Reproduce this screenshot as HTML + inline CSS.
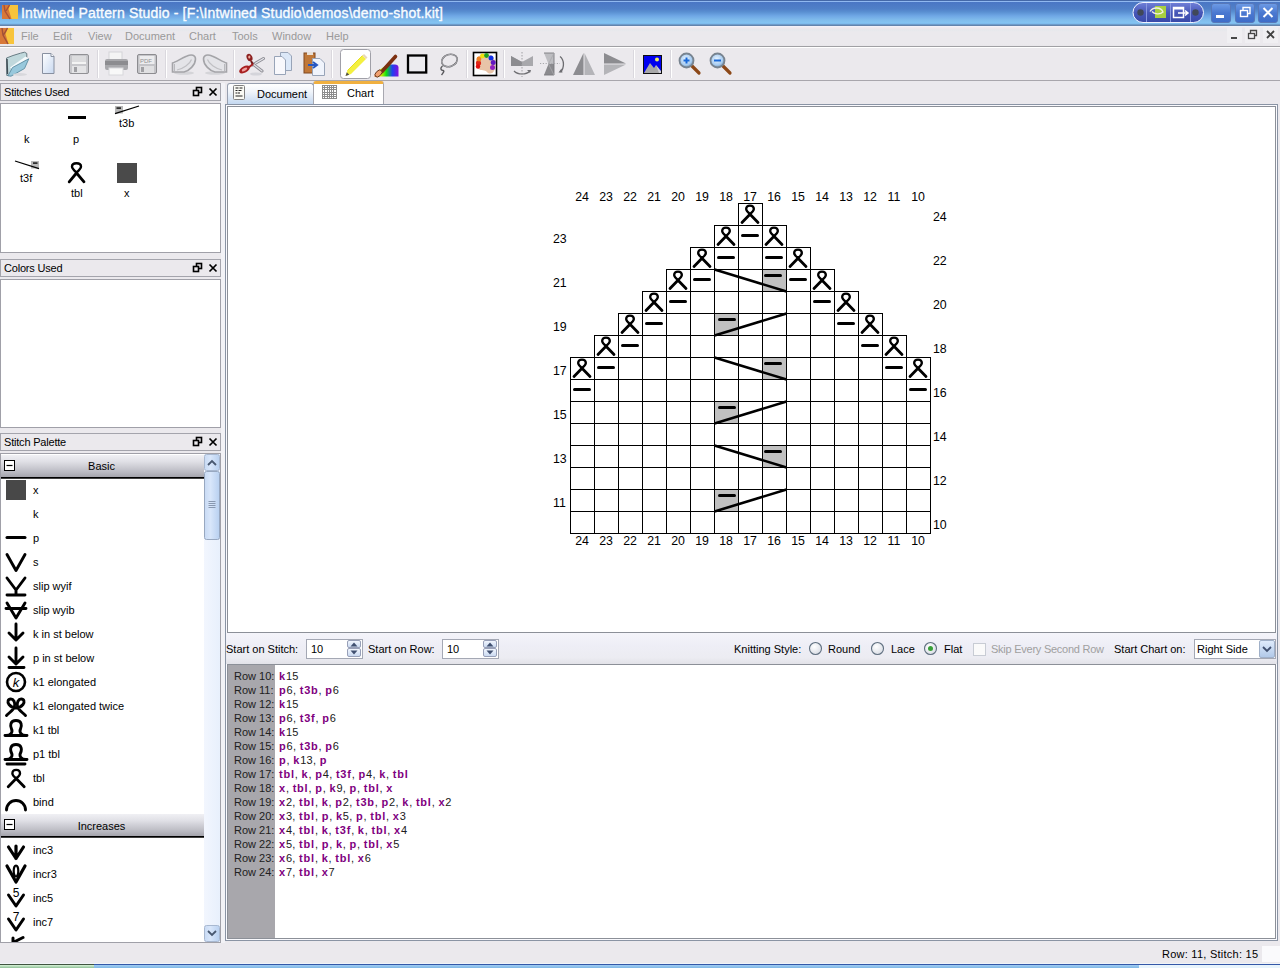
<!DOCTYPE html>
<html><head><meta charset="utf-8">
<style>
*{box-sizing:border-box;margin:0;padding:0}
html,body{width:1280px;height:968px;overflow:hidden;background:#EBE9ED;font-family:"Liberation Sans",sans-serif;font-size:11px;color:#000}
.a{position:absolute}
.t{position:absolute;white-space:pre;line-height:13px}
#title{left:0;top:0;width:1280px;height:26px;background:linear-gradient(#4468A8 0px,#4468A8 1px,#90B8F0 1px,#90B8F0 2px,#4A76C4 2px,#5080C8 9px,#5A90D2 12px,#70A8E6 16px,#80BCEC 20px,#84C4F2 23px,#78B4E8 24px,#6484AC 25px,#6484AC 26px)}
#menubar{left:0;top:26px;width:1280px;height:21px;background:linear-gradient(#F4F4FC 0px,#EFE8EC 2px,#E6E8EC 4px,#EBE9ED 6px,#EBE9ED 18px,#E8E6EA 20px)}
#toolbar{left:0;top:47px;width:1280px;height:34px;background:#EBE9ED;border-top:1px solid #FFFFFF}
.hdr{position:absolute;left:0;width:221px;height:18px;border:1px solid #A4A4AC;background:#EBE9ED}
.hdr .t{left:3px;top:2px;font-size:11px;letter-spacing:-0.2px}
.cnt{position:absolute;left:0;width:221px;background:#fff;border:1px solid #A0A0A8}
.cn{width:24px;text-align:center;font-size:13px;line-height:14px;transform:scaleX(0.95)}
.rw{color:#202020;letter-spacing:0.3px}.rw b{color:#800080;letter-spacing:0.8px}
.grp{background:linear-gradient(#F0F0F4,#E0E0E6 30%,#B8B8C0 80%,#A4A4AC);border-bottom:1px solid #000;box-shadow:0 1px 0 #404040}
.sep{position:absolute;top:51px;width:1px;height:26px;background:#D0CED4;border-right:1px solid #FFFFFF}
</style></head><body>

<svg width="0" height="0" style="position:absolute">
<defs>
<symbol id="tbl" viewBox="0 0 24 22" overflow="visible"><path d="M12 11 C14.9 8.8 15.8 7.6 15.8 6.1 C15.8 3.9 14.1 2.6 12 2.6 C9.9 2.6 8.2 3.9 8.2 6.1 C8.2 7.6 9.1 8.8 12 11" fill="none" stroke="#000" stroke-width="2.4"/><path d="M4 19.4 L12 11.2 L20 19.4" fill="none" stroke="#000" stroke-width="2.8" stroke-linecap="round" stroke-linejoin="round"/></symbol>
</defs></svg>

<div id="title" class="a"></div>
<div class="t" style="left:21px;top:7px;font-size:14px;color:#F8FCFF;letter-spacing:0.17px;-webkit-text-stroke:0.35px #F8FCFF">Intwined Pattern Studio - [F:\Intwined Studio\demos\demo-shot.kit]</div>
<div id="menubar" class="a"></div>
<div class="a" style="left:0;top:46px;width:1280px;height:1px;background:#A0A0A4"></div>
<div class="t" style="left:21px;top:30px;color:#999999">File</div>
<div class="t" style="left:53px;top:30px;color:#999999">Edit</div>
<div class="t" style="left:88px;top:30px;color:#999999">View</div>
<div class="t" style="left:125px;top:30px;color:#999999">Document</div>
<div class="t" style="left:189px;top:30px;color:#999999">Chart</div>
<div class="t" style="left:232px;top:30px;color:#999999">Tools</div>
<div class="t" style="left:272px;top:30px;color:#999999">Window</div>
<div class="t" style="left:326px;top:30px;color:#999999">Help</div>
<div id="toolbar" class="a"></div>
<div class="a" style="left:0;top:80px;width:1280px;height:1px;background:#A8A6AC"></div>


<svg class="a" style="left:0;top:0" width="1280" height="82" viewBox="0 0 1280 82">
<defs>
<linearGradient id="gBtn" x1="0" y1="0" x2="0" y2="1"><stop offset="0" stop-color="#6E9CE6"/><stop offset="0.5" stop-color="#4A78D0"/><stop offset="1" stop-color="#3E6CC8"/></linearGradient>
<linearGradient id="gPill" x1="0" y1="0" x2="0" y2="1"><stop offset="0" stop-color="#7080D8"/><stop offset="0.5" stop-color="#4858B8"/><stop offset="1" stop-color="#3848A8"/></linearGradient>
<linearGradient id="gRain" x1="0" y1="0" x2="1" y2="0"><stop offset="0" stop-color="#F07020"/><stop offset="0.25" stop-color="#F8F000"/><stop offset="0.5" stop-color="#10E010"/><stop offset="0.75" stop-color="#2040F0"/><stop offset="1" stop-color="#8010E0"/></linearGradient>
<linearGradient id="gDoc" x1="0" y1="0" x2="1" y2="1"><stop offset="0" stop-color="#FFFFFF"/><stop offset="1" stop-color="#C8D8F0"/></linearGradient>
<radialGradient id="gLens" cx="0.45" cy="0.4" r="0.6"><stop offset="0" stop-color="#E8F4FF"/><stop offset="0.7" stop-color="#A8CCF0"/><stop offset="1" stop-color="#7090B0"/></radialGradient>
</defs>
<!-- app icon title -->
<rect x="2" y="5" width="16" height="14" fill="#F8C43C"/>
<path d="M2 5 L10 5 L8.5 9 L11.5 19 L2 19 Z" fill="#D87838"/>
<path d="M4 5 L5 11 L10 19 M9.5 5 L6 11" stroke="#A85038" stroke-width="1.4" fill="none"/>
<!-- app icon menubar -->
<rect x="0" y="28" width="14" height="16" fill="#F8C43C"/>
<path d="M0 28 L8 28 L5.5 34 L8.5 44 L0 44 Z" fill="#D87838"/>
<path d="M2 28 L3 35 L8 44 M7.5 28 L3.5 35" stroke="#A05038" stroke-width="1.4" fill="none"/>
<!-- nvidia pill -->
<rect x="1133" y="2.5" width="70.5" height="20" rx="10" fill="url(#gPill)" stroke="#F0F4FF" stroke-width="1"/>
<circle cx="1140.5" cy="12.5" r="3.2" fill="#404858"/>
<circle cx="1195.5" cy="12.5" r="3.2" fill="#404858"/>
<line x1="1146.5" y1="3" x2="1146.5" y2="22" stroke="#8898E0"/>
<line x1="1170.5" y1="3" x2="1170.5" y2="22" stroke="#8898E0"/>
<line x1="1190.5" y1="3" x2="1190.5" y2="22" stroke="#8898E0"/>
<rect x="1155" y="6" width="11" height="12" fill="#A8D040"/>
<path d="M1150 11.5 C1153 6.5 1161 7 1163 12 C1160 15 1154 14 1152 11.5" stroke="#F0F0E0" stroke-width="1.3" fill="none"/>
<rect x="1173.5" y="7.5" width="10" height="10" fill="none" stroke="#fff" stroke-width="1.5"/>
<rect x="1173.5" y="7.5" width="10" height="2" fill="#fff"/>
<path d="M1178 13 L1188 13 M1185 10.5 L1188 13 L1185 15.5" stroke="#fff" stroke-width="1.5" fill="none"/>
<!-- title buttons -->
<rect x="1211.5" y="3.5" width="19" height="19" rx="2.5" fill="url(#gBtn)" stroke="#5878B8"/>
<rect x="1216" y="15" width="8" height="3" fill="#fff"/>
<rect x="1235.5" y="3.5" width="19" height="19" rx="2.5" fill="url(#gBtn)" stroke="#5878B8"/>
<rect x="1240.5" y="10.5" width="7" height="6" fill="none" stroke="#fff" stroke-width="1.4"/>
<path d="M1243 10 L1243 7.5 L1250 7.5 L1250 13.5 L1248 13.5" fill="none" stroke="#fff" stroke-width="1.4"/>
<rect x="1258.5" y="3.5" width="19" height="19" rx="2.5" fill="url(#gBtn)" stroke="#5878B8"/>
<path d="M1263.5 8 L1272.5 17 M1272.5 8 L1263.5 17" stroke="#fff" stroke-width="2"/>
<!-- mdi buttons -->
<rect x="1227" y="27" width="15" height="16" fill="#F0EFF2"/>
<rect x="1231" y="37" width="6" height="2" fill="#484848"/>
<rect x="1245" y="27" width="15" height="16" fill="#F0EFF2"/>
<rect x="1248.5" y="33.5" width="6" height="5" fill="none" stroke="#484848" stroke-width="1.3"/>
<path d="M1250.5 33 L1250.5 30.5 L1256.5 30.5 L1256.5 35.5 L1255 35.5" fill="none" stroke="#484848" stroke-width="1.3"/>
<rect x="1263" y="27" width="15" height="16" fill="#F0EFF2"/>
<path d="M1267 31 L1274 38 M1274 31 L1267 38" stroke="#404040" stroke-width="1.8"/>

<!-- toolbar: open folder -->
<path d="M6.5 58 L13 55.5 L20.5 53.2 L24.5 52.2 L26.8 53.5 L26.8 57.5 L10 75.5 L6.8 75.5 Z" fill="#C0D8DC" stroke="#687C84" stroke-width="1"/>
<path d="M7 59 L7.5 74" stroke="#404C54" stroke-width="1.4"/>
<path d="M10 67.5 L25.5 56.5 L28 58 L13 70 Z" fill="#F4FAFC"/>
<path d="M8 75.8 L12.5 67.5 L28.8 58.8 L24.5 68.5 L11 76.2 Z" fill="#98C8DC" stroke="#5C8CA0" stroke-width="0.9"/>
<ellipse cx="20" cy="74.5" rx="7" ry="1.5" fill="#D8D8DC"/>
<!-- new doc -->
<path d="M42.5 53.5 L51 53.5 L54 56.5 L54 73.5 L42.5 73.5 Z" fill="url(#gDoc)" stroke="#8890A0"/>
<path d="M51 53.5 L51 56.5 L54 56.5" fill="#fff" stroke="#8890A0"/>
<!-- save disabled -->
<rect x="69.5" y="54.5" width="19" height="19" rx="1.5" fill="#C8C8CC" stroke="#909094"/>
<rect x="72" y="56" width="14" height="7" fill="#DCDCDE"/>
<rect x="72" y="62" width="14" height="2" fill="#F4F4F4"/>
<rect x="72" y="66" width="14" height="7" fill="#E4E4E6"/>
<rect x="74" y="67" width="3" height="5" fill="#A0A0A4"/>
<!-- separator -->
<!-- printer -->
<rect x="109" y="52" width="13" height="8" fill="#F4F4F4" stroke="#D4D4D8"/>
<rect x="105" y="59" width="23" height="11" rx="2" fill="#A8A8AC"/>
<rect x="105" y="61" width="23" height="4" fill="#8C8C90"/>
<rect x="109" y="68" width="14" height="7" fill="#F8F8F8" stroke="#D8D8DC"/>
<!-- pdf floppy -->
<rect x="137.5" y="54.5" width="19" height="19" rx="1.5" fill="#C4C4C8" stroke="#8C8C90"/>
<rect x="139.5" y="56" width="15" height="8" fill="#ECECEE"/>
<text x="140" y="62.5" font-family="Liberation Sans" font-size="6" fill="#909094">PDF</text>
<rect x="140" y="66" width="14" height="7" fill="#E0E0E2"/>
<rect x="141" y="67" width="3" height="5" fill="#A0A0A4"/>
<!-- undo / redo disabled -->
<g id="undo">
<ellipse cx="184" cy="73" rx="10" ry="1.8" fill="#D4D4D8"/>
<path d="M172.5 63 L172.5 72 L184 72 C189 71 195.5 65 195.5 59 C195.5 55 191.5 54 187 56 C181 58.5 176 62 172.5 63 Z" fill="#E4E4E8" stroke="#A4A4A8" stroke-width="1.6"/>
<path d="M177 70 C183 69 190 64 191.5 59.5" fill="none" stroke="#C0C0C4" stroke-width="1.2"/>
<path d="M174.5 64 L174.5 71" stroke="#B8B8BC" stroke-width="1"/>
</g>
<use href="#undo" transform="translate(399,0) scale(-1,1)"/>
<!-- scissors -->
<ellipse cx="256" cy="74" rx="6" ry="1.6" fill="#D4D4DA"/>
<path d="M252.5 65 L263.5 58.5" stroke="#8C8C94" stroke-width="3" stroke-linecap="round"/>
<path d="M252.5 65 L263.5 58.5" stroke="#E8E8EC" stroke-width="1.2" stroke-linecap="round"/>
<path d="M253 64 L262 71" stroke="#8C8C94" stroke-width="3" stroke-linecap="round"/>
<path d="M253 64 L262 71" stroke="#E0E0E4" stroke-width="1.2" stroke-linecap="round"/>
<path d="M251 61 L253 64.5" stroke="#701818" stroke-width="2"/>
<ellipse cx="244.5" cy="69.5" rx="5.8" ry="3.2" fill="#A82020" transform="rotate(-28 244.5 69.5)"/>
<ellipse cx="244.5" cy="69.5" rx="3" ry="1.3" fill="#F0A0A0" transform="rotate(-28 244.5 69.5)"/>
<path d="M248 68 L253 64" stroke="#A82020" stroke-width="2"/>
<ellipse cx="249.5" cy="57.5" rx="2.8" ry="3.8" fill="#8C2020" transform="rotate(-25 249.5 57.5)"/>
<ellipse cx="249.3" cy="57" rx="1.1" ry="1.6" fill="#F0B0A0"/>
<!-- copy -->
<path d="M280.5 52.5 L288 52.5 L291.5 56 L291.5 70.5 L280.5 70.5 Z" fill="#DCE8F8" stroke="#98A4B8"/>
<path d="M274.5 56.5 L282 56.5 L285.5 60 L285.5 74.5 L274.5 74.5 Z" fill="#F8F8FC" stroke="#98A4B8"/>
<!-- paste -->
<rect x="304" y="53" width="11" height="20" fill="#C07838" stroke="#804820"/>
<rect x="307" y="52" width="6" height="3" fill="#E8E0D8"/>
<path d="M312.5 58.5 L320 58.5 L324.5 63 L324.5 75.5 L312.5 75.5 Z" fill="#F0F4FC" stroke="#98A4B8"/>
<path d="M308 65 L316 65 M313 62 L317 65 L313 68" stroke="#2858C0" stroke-width="2" fill="none"/>
<!-- pencil button -->
<rect x="340.5" y="49.5" width="30" height="29" rx="3" fill="#FFFFFF" stroke="#A0A0A8"/>
<path d="M345.5 76 L347.5 70.5 L362.5 55.5 L366 59 L351 74 Z" fill="#F4F040"/>
<path d="M347.5 70.5 L362.5 55.5" stroke="#E0D800" stroke-width="0.8"/>
<path d="M362.5 55.5 L364 54 L367.5 57.5 L366 59 Z" fill="#E8D8B8"/>
<path d="M345.5 76 L346.8 72.3 L349.2 74.7 Z" fill="#505050"/>
<!-- brush -->
<path d="M374 76.5 L398.5 76.5 L398.5 67.5 C398.5 65.5 397 64.5 395 64.5 L389 64.5 C382 67 377 71 374 76.5 Z" fill="url(#gRain)"/>
<path d="M382 71.5 L395.5 56.5" stroke="#7C3010" stroke-width="3.6" stroke-linecap="round"/>
<ellipse cx="378.5" cy="73.5" rx="4.2" ry="2.6" transform="rotate(-45 378.5 73.5)" fill="#F0A070" stroke="#603018" stroke-width="0.9"/>
<!-- rect select -->
<rect x="408" y="55.5" width="18.2" height="17" fill="#ECEBEF" stroke="#000" stroke-width="2.3"/>
<!-- lasso -->
<ellipse cx="449.5" cy="60.5" rx="8" ry="6" transform="rotate(-18 449.5 60.5)" fill="none" stroke="#5A5A5E" stroke-width="1.6"/>
<ellipse cx="449.5" cy="60.5" rx="8" ry="6" transform="rotate(-18 449.5 60.5)" fill="none" stroke="#E8E8EC" stroke-width="0.5"/>
<path d="M442.5 66 C440 68 440.5 70 443 70.5 C445 71 443 73 441.5 75" fill="none" stroke="#5A5A5E" stroke-width="1.4"/>
<!-- palette icon -->
<rect x="473.5" y="52.5" width="23" height="23" fill="#fff" stroke="#000" stroke-width="1.6"/>
<path d="M476 63 C475 56 482 53.5 489 54.5 C495 55.5 496.5 64 494.5 70 C493 74 489 74.5 487 72 C485 69.5 481 71 478.5 69 C476.5 67.5 476 65 476 63 Z" fill="#E8C4A8"/>
<circle cx="478.5" cy="63" r="2.6" fill="#E02818"/><circle cx="479" cy="59" r="2.4" fill="#F08020"/><circle cx="482.5" cy="56" r="2.4" fill="#F0E010"/><circle cx="486.5" cy="55.5" r="2.4" fill="#20A020"/><circle cx="491" cy="58" r="2.5" fill="#1030E8"/><circle cx="493.2" cy="62.5" r="2.5" fill="#6018C0"/><circle cx="492.5" cy="67.5" r="2.5" fill="#9020C0"/><circle cx="478" cy="66.5" r="2.2" fill="#E01010"/>
<!-- flip horizontal -->
<path d="M511 56 L522 62 L533 56 L533 66 L511 66 Z" fill="#A8A8AC"/>
<path d="M511 56 L522 62 L522 66 L511 66 Z" fill="#8C8C90"/>
<line x1="522" y1="52" x2="522" y2="77" stroke="#A0A0A4" stroke-dasharray="1.5 1.5"/>
<path d="M514 71 C518 75 526 75 530 71" fill="none" stroke="#707074" stroke-width="1.2"/>
<path d="M527 70 L531 70 L530 73 Z" fill="#707074"/>
<!-- rotate -->
<path d="M544 53 L554 53 L554 64 L548.5 64 Z" fill="#BDBDC1"/>
<path d="M548.5 64 L554 64 L554 75 L544 75 Z" fill="#8A8A8E"/>
<path d="M544 53 L554 53 L554 75 L544 75" fill="none" stroke="#7C7C80" stroke-width="0.9"/>
<path d="M554 53 L548.5 64 L554 75" fill="none" stroke="#A8A8AC" stroke-width="0.8"/>
<line x1="540" y1="63.5" x2="560" y2="63.5" stroke="#A8A8AC" stroke-dasharray="1.2 1.6"/>
<path d="M560 56.5 C564.5 60 564.5 68 560.5 72" fill="none" stroke="#6C6C70" stroke-width="1.3"/>
<path d="M558.5 72.5 L561.5 68.5 L562.5 72.5 Z" fill="#6C6C70"/>
<!-- triangle -->
<path d="M583.5 53 L573 75 L583.5 75 Z" fill="#8C8C90"/>
<path d="M584.5 53 L595 75 L584.5 75 Z" fill="#B4B4B8"/>
<!-- right triangle -->
<path d="M604 53 L626 63.5 L604 63.5 Z" fill="#8C8C90"/>
<path d="M604 64.5 L626 64.5 L604 75 Z" fill="#B4B4B8"/>
<!-- image icon -->
<rect x="643.5" y="55.5" width="18" height="18" fill="#0000F0" stroke="#101010"/>
<circle cx="657" cy="59.5" r="2" fill="#F0F060"/>
<path d="M644 73 L650 63 L654 68 L656 65 L661 73 Z" fill="#A8A8A8"/>
<path d="M656 65 L661 71 L661 73 L659 73 Z" fill="#D0D0D8"/>
<!-- zoom in -->
<line x1="691" y1="65" x2="699" y2="73" stroke="#8C4818" stroke-width="3.2" stroke-linecap="round"/>
<circle cx="686.5" cy="60.5" r="7" fill="url(#gLens)" stroke="#788490" stroke-width="1.8"/>
<path d="M683.5 60.5 L689.5 60.5 M686.5 57.5 L686.5 63.5" stroke="#1868D8" stroke-width="2"/>
<!-- zoom out -->
<line x1="722" y1="65" x2="730" y2="73" stroke="#8C4818" stroke-width="3.2" stroke-linecap="round"/>
<circle cx="717.5" cy="60.5" r="7" fill="url(#gLens)" stroke="#788490" stroke-width="1.8"/>
<path d="M714 60.5 L721 60.5" stroke="#1868D8" stroke-width="2"/>
<!-- separators -->
<g stroke="#DAD8DE"><line x1="97.5" y1="50" x2="97.5" y2="78"/><line x1="165.5" y1="50" x2="165.5" y2="78"/><line x1="233.5" y1="50" x2="233.5" y2="78"/><line x1="331.5" y1="50" x2="331.5" y2="78"/><line x1="466.5" y1="50" x2="466.5" y2="78"/><line x1="503.5" y1="50" x2="503.5" y2="78"/><line x1="633.5" y1="50" x2="633.5" y2="78"/><line x1="670.5" y1="50" x2="670.5" y2="78"/></g>
<g stroke="#FFFFFF"><line x1="98.5" y1="50" x2="98.5" y2="78"/><line x1="166.5" y1="50" x2="166.5" y2="78"/><line x1="234.5" y1="50" x2="234.5" y2="78"/><line x1="332.5" y1="50" x2="332.5" y2="78"/><line x1="467.5" y1="50" x2="467.5" y2="78"/><line x1="504.5" y1="50" x2="504.5" y2="78"/><line x1="634.5" y1="50" x2="634.5" y2="78"/><line x1="671.5" y1="50" x2="671.5" y2="78"/></g>
</svg>

<!-- left dock -->
<div class="hdr" style="top:83px"><div class="t">Stitches Used</div></div>
<div class="cnt" style="top:103px;height:150px"></div>
<div class="hdr" style="top:259px"><div class="t">Colors Used</div></div>
<div class="cnt" style="top:279px;height:149px"></div>
<div class="hdr" style="top:433px"><div class="t">Stitch Palette</div></div>
<div class="cnt" style="top:453px;height:490px"></div>


<!-- dock header icons -->
<svg class="a" style="left:0;top:0" width="222" height="460" viewBox="0 0 222 460">
<g id="fc">
<rect x="196.5" y="87.5" width="5" height="5" fill="none" stroke="#000" stroke-width="1.6"/>
<rect x="193.5" y="90.5" width="5" height="5" fill="#EBE9ED" stroke="#000" stroke-width="1.6"/>
<path d="M209.5 88.5 L216.5 95.5 M216.5 88.5 L209.5 95.5" stroke="#000" stroke-width="1.7"/>
</g>
<use href="#fc" y="176"/>
<use href="#fc" y="350"/>
</svg>
<!-- tabs -->
<div class="a" style="left:227px;top:83px;width:87px;height:21px;border:1px solid #98A0B0;border-bottom:none;border-radius:3px 3px 0 0;background:linear-gradient(#FFFFFF,#F0F4FA 40%,#C4D8F0)"></div>
<div class="t" style="left:257px;top:88px">Document</div>
<div class="a" style="left:313px;top:81px;width:71px;height:24px;border:1px solid #A8A8B0;border-bottom:none;border-radius:3px 3px 0 0;background:#FFFFFF;border-top:3px solid #F0B040"></div>
<div class="t" style="left:347px;top:87px">Chart</div>
<svg class="a" style="left:230px;top:83px" width="110" height="20" viewBox="230 83 110 20">
<rect x="233.5" y="85.5" width="11" height="14" rx="1" fill="#FAFAF4" stroke="#808080"/>
<path d="M235.5 88 h3 M239.5 88 h3 M235.5 90.5 h2 M238.5 90.5 h3 M235.5 93 h2 M238 93 h2 M235.5 96 h7" stroke="#202020" stroke-width="1.2"/>
<path d="M322.5 85 V99 M324.5 85 V99 M327.5 85 V99 M329.5 85 V99 M331.5 85 V99 M333.5 85 V99 M336.5 85 V99 M322 85.5 H337 M322 87.5 H337 M322 89.5 H337 M322 92.5 H337 M322 94.5 H337 M322 96.5 H337 M322 98.5 H337 " stroke="#8C8C8C" stroke-width="1" fill="none" shape-rendering="crispEdges"/>
</svg>


<!-- stitches used content -->
<svg class="a" style="left:0;top:100px" width="221" height="110" viewBox="0 100 221 110">
<rect x="68" y="116" width="18" height="3" fill="#000"/>
<rect x="115" y="106" width="8" height="7.5" fill="#B8B8B8"/>
<rect x="116.5" y="107.3" width="4.5" height="1.6" fill="#202020"/>
<path d="M115 113.6 L139 106" stroke="#000" stroke-width="1.3"/>
<rect x="31" y="161" width="8" height="7.5" fill="#B8B8B8"/>
<rect x="33" y="162.3" width="4.5" height="1.6" fill="#202020"/>
<path d="M15 161 L39 168.6" stroke="#000" stroke-width="1.3"/>
<path d="M76.5 172.5 C79.8 169.8 81 168.2 81 166.6 C81 164.2 79 163.2 76.5 163.2 C74 163.2 72 164.2 72 166.6 C72 168.2 73.2 169.8 76.5 172.5" fill="none" stroke="#000" stroke-width="2.4"/><path d="M69.2 181.8 L76.5 173 L84 181.8" fill="none" stroke="#000" stroke-width="2.8" stroke-linecap="round" stroke-linejoin="round"/>
<rect x="117" y="163" width="20" height="20" fill="#4A4A4A"/>
</svg>
<div class="t" style="left:24px;top:133px">k</div>
<div class="t" style="left:73px;top:133px">p</div>
<div class="t" style="left:119px;top:117px">t3b</div>
<div class="t" style="left:20px;top:172px">t3f</div>
<div class="t" style="left:71px;top:187px">tbl</div>
<div class="t" style="left:124px;top:187px">x</div>


<!-- palette -->
<div class="a" style="left:1px;top:454px;width:203px;height:488px;overflow:hidden;background:#fff">
<div class="a grp" style="left:0;top:1px;width:203px;height:23px"></div>
<div class="a grp" style="left:0;top:360px;width:203px;height:23px"></div>
</div>
<svg class="a" style="left:0;top:454px" width="204" height="488" viewBox="0 454 204 488">
<g fill="none" stroke="#000" stroke-width="2.9" stroke-linecap="round" stroke-linejoin="round">
<rect x="6" y="480" width="20" height="20" fill="#484848" stroke="none"/>
<path d="M7 537.5 H25" stroke-width="3"/>
<path d="M7 554.5 L16 570.5 L25 554.5"/>
<path d="M7 578 L16 590 L25 578 M16 590 V594 M7 595 H25"/>
<path d="M7 603 L16 618 L25 603 M6 608.5 H26"/>
<path d="M16 624 V640 M9 633 L16 640 L23 633"/>
<path d="M16 648 V664 M9 657 L16 664 L23 657 M9 667.5 H24"/>
<circle cx="16" cy="682" r="9" stroke-width="2.6"/>
<path d="M6.5 715.5 C10 712 13.5 710 14.5 706.5 C15.5 702.5 13.5 699 10.8 699 C8 699 7 702 9 704.5 C11 707 14 708 16 708 C18 708 21 707 23 704.5 C25 702 24 699 21.2 699 C18.5 699 16.5 702.5 17.5 706.5 C18.5 710 22 712 25.5 715.5"/>
<path d="M5 735.5 H27 M6 735.5 C11 735.5 13 732 11.5 729 C10 726 10 720.5 16 720.5 C22 720.5 22 726 20.5 729 C19 732 21 735.5 26 735.5"/>
<path d="M5 759.5 H27 M6 759.5 C11 759.5 13 756 11.5 753 C10 750 10 744.5 16 744.5 C22 744.5 22 750 20.5 753 C19 756 21 759.5 26 759.5 M7 764 H25"/>

<path d="M6.5 810 A9.5 9.5 0 0 1 25.5 810"/>
<path d="M8.5 847 L16 858.5 L23.5 847 M16 846 V858.5" stroke-width="3.2"/>
<path d="M7 866 L16 882 L25 866" stroke-width="3.2"/>
<ellipse cx="16" cy="871" rx="2.3" ry="5.5" stroke-width="2.2"/>
<path d="M8.5 895 L16 906 L23.5 895" stroke-width="3"/>
<path d="M8.5 919 L16 930 L23.5 919" stroke-width="3"/>
<path d="M13 938 V946 M14 942 L23 937.5" stroke-width="3"/>
</g>
<use href="#tbl" x="4.2" y="767.3" width="24" height="22"/>
<text x="16" y="687" text-anchor="middle" font-family="Liberation Sans" font-style="italic" font-size="13" fill="#000">k</text>
<text x="16" y="897" text-anchor="middle" font-family="Liberation Sans" font-size="12" fill="#000">5</text>
<text x="16" y="921" text-anchor="middle" font-family="Liberation Sans" font-size="12" fill="#000">7</text>
<rect x="4.5" y="460.5" width="10" height="10" fill="#fff" stroke="#000"/>
<path d="M6.5 465.5 H12.5" stroke="#000" stroke-width="1.2"/>
<rect x="4.5" y="819.5" width="10" height="10" fill="#fff" stroke="#000"/>
<path d="M6.5 824.5 H12.5" stroke="#000" stroke-width="1.2"/>
</svg>
<div class="t" style="left:0;top:460px;width:203px;text-align:center">Basic</div>
<div class="t" style="left:0;top:820px;width:203px;text-align:center">Increases</div>
<div class="t" style="left:33px;top:484px">x</div>
<div class="t" style="left:33px;top:508px">k</div>
<div class="t" style="left:33px;top:532px">p</div>
<div class="t" style="left:33px;top:556px">s</div>
<div class="t" style="left:33px;top:580px">slip wyif</div>
<div class="t" style="left:33px;top:604px">slip wyib</div>
<div class="t" style="left:33px;top:628px">k in st below</div>
<div class="t" style="left:33px;top:652px">p in st below</div>
<div class="t" style="left:33px;top:676px">k1 elongated</div>
<div class="t" style="left:33px;top:700px">k1 elongated twice</div>
<div class="t" style="left:33px;top:724px">k1 tbl</div>
<div class="t" style="left:33px;top:748px">p1 tbl</div>
<div class="t" style="left:33px;top:772px">tbl</div>
<div class="t" style="left:33px;top:796px">bind</div>
<div class="t" style="left:33px;top:844px">inc3</div>
<div class="t" style="left:33px;top:868px">incr3</div>
<div class="t" style="left:33px;top:892px">inc5</div>
<div class="t" style="left:33px;top:916px">inc7</div>

<!-- palette scrollbar -->
<div class="a" style="left:204px;top:454px;width:16px;height:488px;background:linear-gradient(90deg,#F2F6FE,#E8F0FC)"></div>
<svg class="a" style="left:204px;top:454px" width="16" height="488" viewBox="204 454 16 488">
<defs><linearGradient id="gThumb" x1="0" y1="0" x2="1" y2="0"><stop offset="0" stop-color="#C8DAF4"/><stop offset="0.4" stop-color="#D8E6FA"/><stop offset="1" stop-color="#B8D0F0"/></linearGradient></defs>
<rect x="204.5" y="454.5" width="15" height="16" rx="2" fill="url(#gThumb)" stroke="#A8B8D0"/>
<path d="M208 465 L212 461 L216 465" fill="none" stroke="#485870" stroke-width="1.8"/>
<rect x="204.5" y="471.5" width="15" height="68" rx="2" fill="url(#gThumb)" stroke="#98A8C0"/>
<path d="M208.5 501.5 H215.5 M208.5 503.5 H215.5 M208.5 505.5 H215.5 M208.5 507.5 H215.5" stroke="#8898B0"/>
<rect x="204.5" y="925.5" width="15" height="16" rx="2" fill="url(#gThumb)" stroke="#A8B8D0"/>
<path d="M208 931 L212 935 L216 931" fill="none" stroke="#485870" stroke-width="1.8"/>
</svg>

<!-- main frame -->
<div class="a" style="left:221px;top:83px;width:4px;height:860px;background:#F2F2F6"></div>
<div class="a" style="left:225px;top:104px;width:1053px;height:837px;border:1px solid #8A94A4;background:#EEEEF6;box-shadow:inset 0 0 0 1px #FAFAFE"></div>
<div class="a" style="left:226px;top:633px;width:1051px;height:31px;background:linear-gradient(#F4F4FA,#EEEEF6 40%,#ECECF2 80%,#E2E2E8)"></div>
<div class="a" style="left:227px;top:106px;width:1049px;height:527px;border:1px solid #8C9098;background:#fff"></div>
<div class="a" style="left:227px;top:664px;width:1049px;height:275px;border:1px solid #8C9098;background:#fff"></div>
<div class="a" style="left:228px;top:665px;width:47px;height:273px;background:#A8A7AC"></div>


<!-- options bar -->
<div class="t" style="left:226px;top:643px">Start on Stitch:</div>
<div class="a" style="left:306px;top:639px;width:57px;height:20px;border:1px solid #A4A8B4;background:#fff"></div>
<div class="t" style="left:311px;top:643px">10</div>
<div class="t" style="left:368px;top:643px">Start on Row:</div>
<div class="a" style="left:442px;top:639px;width:57px;height:20px;border:1px solid #A4A8B4;background:#fff"></div>
<div class="t" style="left:447px;top:643px">10</div>
<svg class="a" style="left:340px;top:638px" width="160" height="22" viewBox="340 638 160 22">
<defs><linearGradient id="gSpin" x1="0" y1="0" x2="0" y2="1"><stop offset="0" stop-color="#F4F8FF"/><stop offset="1" stop-color="#C8D8F0"/></linearGradient></defs>
<g id="spin">
<rect x="347.5" y="640.5" width="13" height="7" rx="1.5" fill="url(#gSpin)" stroke="#98A0B8"/>
<rect x="347.5" y="648.5" width="13" height="8" rx="1.5" fill="url(#gSpin)" stroke="#98A0B8"/>
<path d="M350.5 646.5 L354 642.5 L357.5 646.5 Z" fill="#405070"/>
<path d="M350.5 650.5 L354 654.5 L357.5 650.5 Z" fill="#405070"/>
</g>
<use href="#spin" x="136"/>
</svg>
<div class="t" style="left:734px;top:643px">Knitting Style:</div>
<div class="t" style="left:828px;top:643px">Round</div>
<div class="t" style="left:891px;top:643px">Lace</div>
<div class="t" style="left:944px;top:643px">Flat</div>
<div class="t" style="left:991px;top:643px;color:#A0A0A0;letter-spacing:-0.25px">Skip Every Second Row</div>
<div class="t" style="left:1114px;top:643px">Start Chart on:</div>
<div class="a" style="left:1194px;top:639px;width:82px;height:20px;border:1px solid #A4A8B4;background:#fff"></div>
<div class="t" style="left:1197px;top:643px">Right Side</div>
<svg class="a" style="left:800px;top:636px" width="476" height="26" viewBox="800 636 476 26">
<defs><radialGradient id="gRad" cx="0.4" cy="0.35" r="0.7"><stop offset="0" stop-color="#FFFFFF"/><stop offset="1" stop-color="#D8DCE4"/></radialGradient>
<linearGradient id="gDrop" x1="0" y1="0" x2="0" y2="1"><stop offset="0" stop-color="#E0ECFC"/><stop offset="1" stop-color="#B0C8E8"/></linearGradient></defs>
<circle cx="815.5" cy="648.5" r="6" fill="url(#gRad)" stroke="#607080" stroke-width="1.1"/>
<circle cx="877.5" cy="648.5" r="6" fill="url(#gRad)" stroke="#607080" stroke-width="1.1"/>
<circle cx="930.5" cy="648.5" r="6" fill="url(#gRad)" stroke="#607080" stroke-width="1.1"/>
<circle cx="930.5" cy="648.5" r="2.5" fill="#38A038"/>
<rect x="973.5" y="643.5" width="12" height="12" fill="#FAFAFA" stroke="#C8CCD4"/>
<rect x="1259.5" y="640.5" width="15" height="17" rx="1.5" fill="url(#gDrop)" stroke="#A0B0C8"/>
<path d="M1263 647 L1267 651 L1271 647" fill="none" stroke="#405070" stroke-width="1.8"/>
</svg>

<!-- instructions -->
<div class="t" style="left:234px;top:670px;color:#202020">Row 10:</div>
<div class="t rw" style="left:279px;top:670px"><b>k</b>15</div>
<div class="t" style="left:234px;top:684px;color:#202020">Row 11:</div>
<div class="t rw" style="left:279px;top:684px"><b>p</b>6, <b>t3b</b>, <b>p</b>6</div>
<div class="t" style="left:234px;top:698px;color:#202020">Row 12:</div>
<div class="t rw" style="left:279px;top:698px"><b>k</b>15</div>
<div class="t" style="left:234px;top:712px;color:#202020">Row 13:</div>
<div class="t rw" style="left:279px;top:712px"><b>p</b>6, <b>t3f</b>, <b>p</b>6</div>
<div class="t" style="left:234px;top:726px;color:#202020">Row 14:</div>
<div class="t rw" style="left:279px;top:726px"><b>k</b>15</div>
<div class="t" style="left:234px;top:740px;color:#202020">Row 15:</div>
<div class="t rw" style="left:279px;top:740px"><b>p</b>6, <b>t3b</b>, <b>p</b>6</div>
<div class="t" style="left:234px;top:754px;color:#202020">Row 16:</div>
<div class="t rw" style="left:279px;top:754px"><b>p</b>, <b>k</b>13, <b>p</b></div>
<div class="t" style="left:234px;top:768px;color:#202020">Row 17:</div>
<div class="t rw" style="left:279px;top:768px"><b>tbl</b>, <b>k</b>, <b>p</b>4, <b>t3f</b>, <b>p</b>4, <b>k</b>, <b>tbl</b></div>
<div class="t" style="left:234px;top:782px;color:#202020">Row 18:</div>
<div class="t rw" style="left:279px;top:782px"><b>x</b>, <b>tbl</b>, <b>p</b>, <b>k</b>9, <b>p</b>, <b>tbl</b>, <b>x</b></div>
<div class="t" style="left:234px;top:796px;color:#202020">Row 19:</div>
<div class="t rw" style="left:279px;top:796px"><b>x</b>2, <b>tbl</b>, <b>k</b>, <b>p</b>2, <b>t3b</b>, <b>p</b>2, <b>k</b>, <b>tbl</b>, <b>x</b>2</div>
<div class="t" style="left:234px;top:810px;color:#202020">Row 20:</div>
<div class="t rw" style="left:279px;top:810px"><b>x</b>3, <b>tbl</b>, <b>p</b>, <b>k</b>5, <b>p</b>, <b>tbl</b>, <b>x</b>3</div>
<div class="t" style="left:234px;top:824px;color:#202020">Row 21:</div>
<div class="t rw" style="left:279px;top:824px"><b>x</b>4, <b>tbl</b>, <b>k</b>, <b>t3f</b>, <b>k</b>, <b>tbl</b>, <b>x</b>4</div>
<div class="t" style="left:234px;top:838px;color:#202020">Row 22:</div>
<div class="t rw" style="left:279px;top:838px"><b>x</b>5, <b>tbl</b>, <b>p</b>, <b>k</b>, <b>p</b>, <b>tbl</b>, <b>x</b>5</div>
<div class="t" style="left:234px;top:852px;color:#202020">Row 23:</div>
<div class="t rw" style="left:279px;top:852px"><b>x</b>6, <b>tbl</b>, <b>k</b>, <b>tbl</b>, <b>x</b>6</div>
<div class="t" style="left:234px;top:866px;color:#202020">Row 24:</div>
<div class="t rw" style="left:279px;top:866px"><b>x</b>7, <b>tbl</b>, <b>x</b>7</div>
<!-- chart -->
<svg class="a" style="left:227px;top:106px" width="1049" height="527" viewBox="227 106 1049 527">
<rect x="762" y="269" width="24" height="22" fill="#C0C0C0"/>
<path d="M765.5 275.5 H780.5" stroke="#000" stroke-width="3" stroke-linecap="round"/>
<rect x="714" y="313" width="24" height="22" fill="#C0C0C0"/>
<path d="M719.5 319.5 H734.5" stroke="#000" stroke-width="3" stroke-linecap="round"/>
<rect x="762" y="357" width="24" height="22" fill="#C0C0C0"/>
<path d="M765.5 363.5 H780.5" stroke="#000" stroke-width="3" stroke-linecap="round"/>
<rect x="714" y="401" width="24" height="22" fill="#C0C0C0"/>
<path d="M719.5 407.5 H734.5" stroke="#000" stroke-width="3" stroke-linecap="round"/>
<rect x="762" y="445" width="24" height="22" fill="#C0C0C0"/>
<path d="M765.5 451.5 H780.5" stroke="#000" stroke-width="3" stroke-linecap="round"/>
<rect x="714" y="489" width="24" height="22" fill="#C0C0C0"/>
<path d="M719.5 495.5 H734.5" stroke="#000" stroke-width="3" stroke-linecap="round"/>
<path d="M738 203.5H763M738 225.5H763M738.5 203V226M762.5 203V226M714 225.5H787M714 247.5H787M714.5 225V248M738.5 225V248M762.5 225V248M786.5 225V248M690 247.5H811M690 269.5H811M690.5 247V270M714.5 247V270M738.5 247V270M762.5 247V270M786.5 247V270M810.5 247V270M666 269.5H835M666 291.5H835M666.5 269V292M690.5 269V292M714.5 269V292M738.5 269V292M762.5 269V292M786.5 269V292M810.5 269V292M834.5 269V292M642 291.5H859M642 313.5H859M642.5 291V314M666.5 291V314M690.5 291V314M714.5 291V314M738.5 291V314M762.5 291V314M786.5 291V314M810.5 291V314M834.5 291V314M858.5 291V314M618 313.5H883M618 335.5H883M618.5 313V336M642.5 313V336M666.5 313V336M690.5 313V336M714.5 313V336M738.5 313V336M762.5 313V336M786.5 313V336M810.5 313V336M834.5 313V336M858.5 313V336M882.5 313V336M594 335.5H907M594 357.5H907M594.5 335V358M618.5 335V358M642.5 335V358M666.5 335V358M690.5 335V358M714.5 335V358M738.5 335V358M762.5 335V358M786.5 335V358M810.5 335V358M834.5 335V358M858.5 335V358M882.5 335V358M906.5 335V358M570 511.5H931M570 533.5H931M570.5 511V534M594.5 511V534M618.5 511V534M642.5 511V534M666.5 511V534M690.5 511V534M714.5 511V534M738.5 511V534M762.5 511V534M786.5 511V534M810.5 511V534M834.5 511V534M858.5 511V534M882.5 511V534M906.5 511V534M930.5 511V534M570 489.5H931M570 511.5H931M570.5 489V512M594.5 489V512M618.5 489V512M642.5 489V512M666.5 489V512M690.5 489V512M714.5 489V512M738.5 489V512M762.5 489V512M786.5 489V512M810.5 489V512M834.5 489V512M858.5 489V512M882.5 489V512M906.5 489V512M930.5 489V512M570 467.5H931M570 489.5H931M570.5 467V490M594.5 467V490M618.5 467V490M642.5 467V490M666.5 467V490M690.5 467V490M714.5 467V490M738.5 467V490M762.5 467V490M786.5 467V490M810.5 467V490M834.5 467V490M858.5 467V490M882.5 467V490M906.5 467V490M930.5 467V490M570 445.5H931M570 467.5H931M570.5 445V468M594.5 445V468M618.5 445V468M642.5 445V468M666.5 445V468M690.5 445V468M714.5 445V468M738.5 445V468M762.5 445V468M786.5 445V468M810.5 445V468M834.5 445V468M858.5 445V468M882.5 445V468M906.5 445V468M930.5 445V468M570 423.5H931M570 445.5H931M570.5 423V446M594.5 423V446M618.5 423V446M642.5 423V446M666.5 423V446M690.5 423V446M714.5 423V446M738.5 423V446M762.5 423V446M786.5 423V446M810.5 423V446M834.5 423V446M858.5 423V446M882.5 423V446M906.5 423V446M930.5 423V446M570 401.5H931M570 423.5H931M570.5 401V424M594.5 401V424M618.5 401V424M642.5 401V424M666.5 401V424M690.5 401V424M714.5 401V424M738.5 401V424M762.5 401V424M786.5 401V424M810.5 401V424M834.5 401V424M858.5 401V424M882.5 401V424M906.5 401V424M930.5 401V424M570 379.5H931M570 401.5H931M570.5 379V402M594.5 379V402M618.5 379V402M642.5 379V402M666.5 379V402M690.5 379V402M714.5 379V402M738.5 379V402M762.5 379V402M786.5 379V402M810.5 379V402M834.5 379V402M858.5 379V402M882.5 379V402M906.5 379V402M930.5 379V402M570 357.5H931M570 379.5H931M570.5 357V380M594.5 357V380M618.5 357V380M642.5 357V380M666.5 357V380M690.5 357V380M714.5 357V380M738.5 357V380M762.5 357V380M786.5 357V380M810.5 357V380M834.5 357V380M858.5 357V380M882.5 357V380M906.5 357V380M930.5 357V380" stroke="#000" stroke-width="1" fill="none"/>
<use href="#tbl" x="738" y="203" width="24" height="22"/>
<use href="#tbl" x="714" y="225" width="24" height="22"/>
<path d="M742.5 235.5H757.5" stroke="#000" stroke-width="3" stroke-linecap="round"/>
<use href="#tbl" x="762" y="225" width="24" height="22"/>
<use href="#tbl" x="690" y="247" width="24" height="22"/>
<path d="M718.5 257.5H733.5" stroke="#000" stroke-width="3" stroke-linecap="round"/>
<path d="M766.5 257.5H781.5" stroke="#000" stroke-width="3" stroke-linecap="round"/>
<use href="#tbl" x="786" y="247" width="24" height="22"/>
<use href="#tbl" x="666" y="269" width="24" height="22"/>
<path d="M694.5 279.5H709.5" stroke="#000" stroke-width="3" stroke-linecap="round"/>
<path d="M790.5 279.5H805.5" stroke="#000" stroke-width="3" stroke-linecap="round"/>
<use href="#tbl" x="810" y="269" width="24" height="22"/>
<use href="#tbl" x="642" y="291" width="24" height="22"/>
<path d="M670.5 301.5H685.5" stroke="#000" stroke-width="3" stroke-linecap="round"/>
<path d="M814.5 301.5H829.5" stroke="#000" stroke-width="3" stroke-linecap="round"/>
<use href="#tbl" x="834" y="291" width="24" height="22"/>
<use href="#tbl" x="618" y="313" width="24" height="22"/>
<path d="M646.5 323.5H661.5" stroke="#000" stroke-width="3" stroke-linecap="round"/>
<path d="M838.5 323.5H853.5" stroke="#000" stroke-width="3" stroke-linecap="round"/>
<use href="#tbl" x="858" y="313" width="24" height="22"/>
<use href="#tbl" x="594" y="335" width="24" height="22"/>
<path d="M622.5 345.5H637.5" stroke="#000" stroke-width="3" stroke-linecap="round"/>
<path d="M862.5 345.5H877.5" stroke="#000" stroke-width="3" stroke-linecap="round"/>
<use href="#tbl" x="882" y="335" width="24" height="22"/>
<use href="#tbl" x="570" y="357" width="24" height="22"/>
<path d="M598.5 367.5H613.5" stroke="#000" stroke-width="3" stroke-linecap="round"/>
<path d="M886.5 367.5H901.5" stroke="#000" stroke-width="3" stroke-linecap="round"/>
<use href="#tbl" x="906" y="357" width="24" height="22"/>
<path d="M574.5 389.5H589.5" stroke="#000" stroke-width="3" stroke-linecap="round"/>
<path d="M910.5 389.5H925.5" stroke="#000" stroke-width="3" stroke-linecap="round"/>
<path d="M714.5 269.5 L786.5 291.5" stroke="#000" stroke-width="2.6"/>
<path d="M714.5 335.5 L786.5 313.5" stroke="#000" stroke-width="2.6"/>
<path d="M714.5 357.5 L786.5 379.5" stroke="#000" stroke-width="2.6"/>
<path d="M714.5 423.5 L786.5 401.5" stroke="#000" stroke-width="2.6"/>
<path d="M714.5 445.5 L786.5 467.5" stroke="#000" stroke-width="2.6"/>
<path d="M714.5 511.5 L786.5 489.5" stroke="#000" stroke-width="2.6"/>
</svg>
<div class="t cn" style="left:570px;top:190px">24</div>
<div class="t cn" style="left:570px;top:534px">24</div>
<div class="t cn" style="left:594px;top:190px">23</div>
<div class="t cn" style="left:594px;top:534px">23</div>
<div class="t cn" style="left:618px;top:190px">22</div>
<div class="t cn" style="left:618px;top:534px">22</div>
<div class="t cn" style="left:642px;top:190px">21</div>
<div class="t cn" style="left:642px;top:534px">21</div>
<div class="t cn" style="left:666px;top:190px">20</div>
<div class="t cn" style="left:666px;top:534px">20</div>
<div class="t cn" style="left:690px;top:190px">19</div>
<div class="t cn" style="left:690px;top:534px">19</div>
<div class="t cn" style="left:714px;top:190px">18</div>
<div class="t cn" style="left:714px;top:534px">18</div>
<div class="t cn" style="left:738px;top:190px">17</div>
<div class="t cn" style="left:738px;top:534px">17</div>
<div class="t cn" style="left:762px;top:190px">16</div>
<div class="t cn" style="left:762px;top:534px">16</div>
<div class="t cn" style="left:786px;top:190px">15</div>
<div class="t cn" style="left:786px;top:534px">15</div>
<div class="t cn" style="left:810px;top:190px">14</div>
<div class="t cn" style="left:810px;top:534px">14</div>
<div class="t cn" style="left:834px;top:190px">13</div>
<div class="t cn" style="left:834px;top:534px">13</div>
<div class="t cn" style="left:858px;top:190px">12</div>
<div class="t cn" style="left:858px;top:534px">12</div>
<div class="t cn" style="left:882px;top:190px">11</div>
<div class="t cn" style="left:882px;top:534px">11</div>
<div class="t cn" style="left:906px;top:190px">10</div>
<div class="t cn" style="left:906px;top:534px">10</div>
<div class="t" style="left:933px;top:518px;font-size:13px;line-height:14px;transform:scaleX(0.95);transform-origin:left">10</div>
<div class="t" style="left:553px;top:496px;font-size:13px;line-height:14px;transform:scaleX(0.95);transform-origin:left">11</div>
<div class="t" style="left:933px;top:474px;font-size:13px;line-height:14px;transform:scaleX(0.95);transform-origin:left">12</div>
<div class="t" style="left:553px;top:452px;font-size:13px;line-height:14px;transform:scaleX(0.95);transform-origin:left">13</div>
<div class="t" style="left:933px;top:430px;font-size:13px;line-height:14px;transform:scaleX(0.95);transform-origin:left">14</div>
<div class="t" style="left:553px;top:408px;font-size:13px;line-height:14px;transform:scaleX(0.95);transform-origin:left">15</div>
<div class="t" style="left:933px;top:386px;font-size:13px;line-height:14px;transform:scaleX(0.95);transform-origin:left">16</div>
<div class="t" style="left:553px;top:364px;font-size:13px;line-height:14px;transform:scaleX(0.95);transform-origin:left">17</div>
<div class="t" style="left:933px;top:342px;font-size:13px;line-height:14px;transform:scaleX(0.95);transform-origin:left">18</div>
<div class="t" style="left:553px;top:320px;font-size:13px;line-height:14px;transform:scaleX(0.95);transform-origin:left">19</div>
<div class="t" style="left:933px;top:298px;font-size:13px;line-height:14px;transform:scaleX(0.95);transform-origin:left">20</div>
<div class="t" style="left:553px;top:276px;font-size:13px;line-height:14px;transform:scaleX(0.95);transform-origin:left">21</div>
<div class="t" style="left:933px;top:254px;font-size:13px;line-height:14px;transform:scaleX(0.95);transform-origin:left">22</div>
<div class="t" style="left:553px;top:232px;font-size:13px;line-height:14px;transform:scaleX(0.95);transform-origin:left">23</div>
<div class="t" style="left:933px;top:210px;font-size:13px;line-height:14px;transform:scaleX(0.95);transform-origin:left">24</div>
<!-- status bar -->
<div class="t" style="left:1162px;top:948px;letter-spacing:0.25px">Row: 11, Stitch: 15</div>
<div class="a" style="left:1262px;top:946px;width:18px;height:16px;background:#FAFAFC"></div>
<div class="a" style="left:0;top:963px;width:1280px;height:1px;background:#F0F4F8"></div>
<div class="a" style="left:0;top:964px;width:94px;height:1px;background:#405440"></div>
<div class="a" style="left:94px;top:964px;width:1186px;height:1px;background:#3458A8"></div>
<div class="a" style="left:0;top:965px;width:94px;height:3px;background:linear-gradient(#D8F4D8,#90C098)"></div>
<div class="a" style="left:94px;top:965px;width:1045px;height:3px;background:linear-gradient(#A0CCF4,#80B8E4)"></div>
<div class="a" style="left:1139px;top:965px;width:141px;height:3px;background:#E8F4FC"></div>
</body></html>
